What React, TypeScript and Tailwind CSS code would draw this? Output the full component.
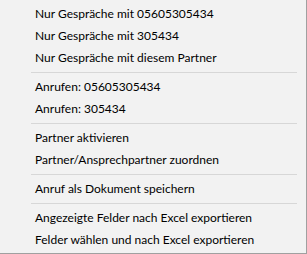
import React from 'react'

type Entry = { label: string } | { sep: true }

const entries: Entry[] = [
  { label: 'Nur Gespräche mit 05605305434' },
  { label: 'Nur Gespräche mit 305434' },
  { label: 'Nur Gespräche mit diesem Partner' },
  { sep: true },
  { label: 'Anrufen: 05605305434' },
  { label: 'Anrufen: 305434' },
  { sep: true },
  { label: 'Partner aktivieren' },
  { label: 'Partner/Ansprechpartner zuordnen' },
  { sep: true },
  { label: 'Anruf als Dokument speichern' },
  { sep: true },
  { label: 'Angezeigte Felder nach Excel exportieren' },
  { label: 'Felder wählen und nach Excel exportieren' },
]

export default function App() {
  return (
    <div className="w-[307px] h-[254px] bg-white">
      <div className="w-[307px] h-[254px] bg-[#f2f2f2] border-r border-b border-[#a0a0a0] pt-[3px] font-['Lato',sans-serif] text-[12px] text-black">
        {entries.map((e, i) =>
          'sep' in e ? (
            <div key={i} className="h-[7px] flex items-center pl-[31px] pr-[9px]">
              <div className="h-px w-full bg-[#d7d7d7]" />
            </div>
          ) : (
            <div key={i} className="h-[22px] flex items-center pl-[35px] leading-none whitespace-nowrap">
              {e.label}
            </div>
          )
        )}
      </div>
    </div>
  )
}
